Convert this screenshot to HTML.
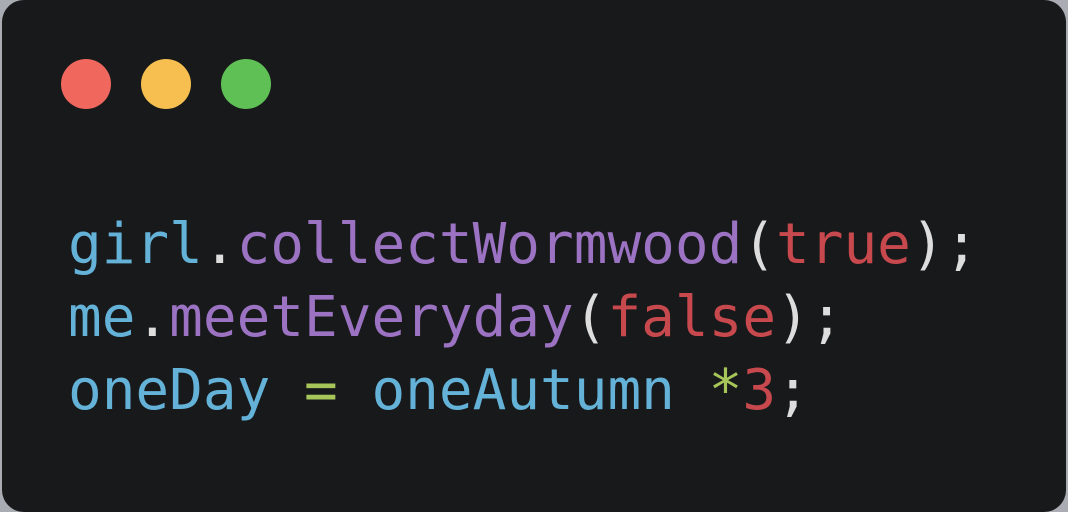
<!DOCTYPE html>
<html><head><style>
html,body{margin:0;padding:0;width:1068px;height:512px;background:#a9adb3;overflow:hidden}
.card{position:absolute;left:2px;top:0;width:1064px;height:512px;background:#18191b;border-radius:22px}
.dot{position:absolute;top:59px;width:50px;height:50px;border-radius:50%}
pre{position:absolute;left:68px;top:208px;margin:0;font-family:"DejaVu Sans Mono",monospace;font-size:56px;line-height:73px;color:#ddd}
.b{color:#64b2d8}.p{color:#9b73c2}.r{color:#c8494d}.g{color:#a7c65a}
</style></head><body>
<div class="card"></div>
<div class="dot" style="left:61px;background:#ef675d"></div>
<div class="dot" style="left:141px;background:#f6bf4f"></div>
<div class="dot" style="left:221px;background:#5fc155"></div>
<pre><span class="b">girl</span>.<span class="p">collectWormwood</span>(<span class="r">true</span>);
<span class="b">me</span>.<span class="p">meetEveryday</span>(<span class="r">false</span>);
<span class="b">oneDay</span> <span class="g">=</span> <span class="b">oneAutumn</span> <span class="g">*</span><span class="r">3</span>;</pre>
</body></html>
